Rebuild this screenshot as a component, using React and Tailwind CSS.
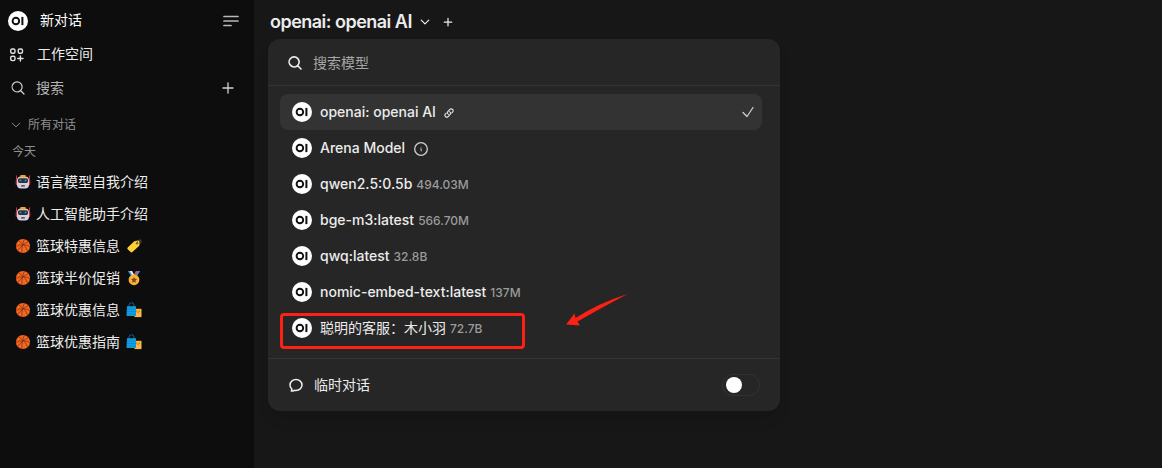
import React from 'react';

function Logo() {
  return (
    <svg viewBox="0 0 20 20" className="size-5 shrink-0">
      <circle cx="10" cy="10" r="10" fill="#fff" />
      <circle cx="7.9" cy="10" r="3.3" fill="none" stroke="#111" strokeWidth="1.9" />
      <rect x="13.4" y="5.9" width="2" height="8.2" fill="#111" />
    </svg>
  );
}

function Stroke({ d, className, width = 1.5 }) {
  return (
    <svg
      viewBox="0 0 24 24"
      fill="none"
      stroke="currentColor"
      strokeWidth={width}
      strokeLinecap="round"
      strokeLinejoin="round"
      className={className}
    >
      <path d={d} />
    </svg>
  );
}

const SEARCH = 'm21 21-5.2-5.2m0 0A7.5 7.5 0 1 0 5.2 5.2a7.5 7.5 0 0 0 10.6 10.6Z';
const CHEVRON = 'm19.5 8.25-7.5 7.5-7.5-7.5';
const PLUS = 'M12 4.5v15m7.5-7.5h-15';
const LINK =
  'M13.19 8.688a4.5 4.5 0 0 1 1.242 7.244l-4.5 4.5a4.5 4.5 0 0 1-6.364-6.364l1.757-1.757m13.35-.622 1.757-1.757a4.5 4.5 0 0 0-6.364-6.364l-4.5 4.5a4.5 4.5 0 0 0 1.242 7.244';
const CHAT =
  'M12 20.25c4.97 0 9-3.694 9-8.25s-4.03-8.25-9-8.25S3 7.444 3 12c0 2.104.859 4.023 2.273 5.48.432.447.74 1.04.586 1.641a4.483 4.483 0 0 1-.923 1.785A5.969 5.969 0 0 0 6 21c1.282 0 2.47-.402 3.445-1.087.81.22 1.668.337 2.555.337Z';

function Workspace() {
  return (
    <svg viewBox="0 0 16 16" fill="none" stroke="#e3e3e3" strokeWidth="1.4" className="size-4">
      <rect x="1.7" y="2" width="4.300" height="4.300" rx="1.500" />
      <rect x="9.2" y="2" width="4.300" height="4.300" rx="1.500" />
      <rect x="1.7" y="9.3" width="4.300" height="4.300" rx="1.500" />
      <path d="M11.400 8.900v5.200M8.800 11.500h5.200" strokeLinecap="round" />
    </svg>
  );
}

function Robot() {
  return (
    <svg viewBox="0 0 16 16" className="size-4">
      <path d="M1.500 1.500v5M14.500 1.500v5" stroke="#d13438" strokeWidth="1" />
      <rect x=".7" y="6" width="2" height="5" rx=".8" fill="#d13438" />
      <rect x="13.3" y="6" width="2" height="5" rx=".8" fill="#d13438" />
      <rect x="2" y="2.6" width="12" height="12" rx="4" fill="#d8cfe0" />
      <rect x="5.300" y="1" width="5.400" height="2.400" rx=".8" fill="#f2a52b" />
      <rect x="3" y="4.300" width="10" height="4.600" rx="1.600" fill="#27323a" />
      <circle cx="5.4" cy="6.5" r="1.100" fill="#2b8fa5" />
      <circle cx="10.6" cy="6.5" r="1.100" fill="#2b8fa5" />
      <rect x="6" y="11.300" width="4" height="1.300" rx=".6" fill="#35303a" />
    </svg>
  );
}

function Basketball() {
  return (
    <svg viewBox="0 0 16 16" className="size-4">
      <circle cx="8" cy="8" r="7.1" fill="#f8651f" />
      <path
        d="M9.5 1C7.5 5 6.500 10 7 15M1 8.500C5 6 11 6 15 9M3.500 2.700C7 5 11.500 9 12.500 13.500M2.300 12.500C5 9.500 10 5 13.500 3.500"
        stroke="#5c2c20"
        strokeWidth=".65"
        fill="none"
      />
    </svg>
  );
}

function Tag() {
  return (
    <svg viewBox="0 0 16 16" className="size-4">
      <path d="M8 3.600Q8.500 3 9.300 2.900L12.300 2.500Q13.300 2.500 13.400 3.500L13.600 6.500Q13.600 7.300 13 7.900L6.400 14.100Q5.500 14.900 4.600 14.100L1.700 11.200Q.8 10.300 1.700 9.400Z" fill="#fdd037" />
      <circle cx="11" cy="5.200" r="1.200" fill="#9c5a22" />
      <path d="M11.300 5C11 2 14.600.9 15.100 3.200 15.300 4.700 14 5.800 12.800 5.500" stroke="#7a6a58" strokeWidth=".8" fill="none" />
    </svg>
  );
}

function Medal() {
  return (
    <svg viewBox="0 0 16 16" className="size-4">
      <path d="M1.800 1h4l3 5H5Z" fill="#2d9be0" />
      <path d="M14.200 1h-4L7 6h4Z" fill="#2d9be0" />
      <path d="M3.800 1h2.300L8.700 6H6.500Z" fill="#f3e8ea" />
      <path d="M12.200 1H9.900L7.300 6h2.200Z" fill="#e04a50" />
      <circle cx="8" cy="9.800" r="5.400" fill="#f9b233" />
      <path d="m8 6.900.95 1.900 2.100.3-1.500 1.500.35 2.100L8 11.700l-1.900 1 .35-2.100-1.500-1.500 2.100-.3Z" fill="#7c4a1c" />
    </svg>
  );
}

function Bags() {
  return (
    <svg viewBox="0 0 16 16" className="size-4">
      <path d="M3 5V3Q3 .8 5.500.8T8 3v2" stroke="#245a86" strokeWidth="1" fill="none" />
      <path d="M8.500 6.800h7v8.300h-7Z" fill="#fbb941" />
      <path d="M10.800 8.300v1q0 1 1.300 1t1.300-1v-1" stroke="#9a6320" strokeWidth=".6" fill="none" />
      <path d="M1 4.300h9V14H.5Z" fill="#159de3" />
      <path d="M1 7h9M.8 9.500H10M.8 12H10" stroke="#0d7fc4" strokeWidth=".6" />
    </svg>
  );
}

const chats = [
  [Robot, '语言模型自我介绍'],
  [Robot, '人工智能助手介绍'],
  [Basketball, '篮球特惠信息', Tag],
  [Basketball, '篮球半价促销', Medal],
  [Basketball, '篮球优惠信息', Bags],
  [Basketball, '篮球优惠指南', Bags],
];

function Sidebar() {
  return (
    <aside className="flex w-[254px] shrink-0 flex-col bg-[#0d0d0d] text-sm text-[#ececec]">
      <div className="flex h-[41px] items-center pl-2 pr-[14px]">
        <Logo />
        <span className="ml-3 flex-1 pb-0.5 text-white">新对话</span>
        <svg viewBox="0 0 18 12" className="h-3 w-[18px]" stroke="#b8b8b8" strokeWidth="1.700" strokeLinecap="round">
          <path d="M2 1.500h14M2 6h14M2 10.500h7" />
        </svg>
      </div>
      <div className="flex h-[27px] items-center pl-[9px]">
        <Workspace />
        <span className="ml-3 pb-0.5">工作空间</span>
      </div>
      <div className="flex h-10 items-center pl-[10px] pr-[18px] text-[#b4b4b4]">
        <Stroke d={SEARCH} className="size-4 text-[#d5d5d5]" width={1.800} />
        <span className="ml-[10px] flex-1">搜索</span>
        <Stroke d={PLUS} className="size-4 text-[#cfcfcf]" width={2} />
      </div>
      <div className="flex h-[34px] items-center pl-[10px] text-xs text-[#8f8f8f]">
        <Stroke d={CHEVRON} className="size-3" width={2} />
        <span className="ml-[6px]">所有对话</span>
      </div>
      <div className="flex h-6 items-center pb-1 pl-3 text-xs text-[#8f8f8f]">今天</div>
      {chats.map(([Icon, title, End]) => (
        <div key={title} className="flex h-8 items-center pl-[15px]">
          <Icon />
          <span className="ml-[5px]">{title}</span>
          {End && <span className="ml-[6px]"><End /></span>}
        </div>
      ))}
    </aside>
  );
}

const models = [
  ['Arena Model', null],
  ['qwen2.5:0.5b', '494.03M'],
  ['bge-m3:latest', '566.70M'],
  ['qwq:latest', '32.8B'],
  ['nomic-embed-text:latest', '137M'],
];

function Size({ children }) {
  return <span className="ml-1 pt-0.5 text-xs font-medium text-[#9b9b9b]">{children}</span>;
}

function ModelMenu() {
  return (
    <div className="ml-[14px] flex h-[372px] w-[512px] flex-col rounded-xl bg-[#262626] text-sm text-[#ececec] shadow-lg">
      <div className="flex h-[47px] items-center border-b border-[#333] pl-5 pt-0.5">
        <Stroke d={SEARCH} className="-ml-px size-4" width={2.500} />
        <span className="ml-[10px] text-[#a5a5a5]">搜索模型</span>
      </div>
      <div className="flex flex-col px-3 pt-2 font-[550]">
        <div className="flex h-9 w-[482px] items-center rounded-lg bg-[#333] px-3">
          <Logo />
          <span className="ml-2">openai: openai AI</span>
          <Stroke d={LINK} className="ml-2 mt-0.5 size-[10px]" width={2.500} />
          <Stroke d="m4.500 12.750 6 6 9-13.500" className="-mr-1.5 ml-auto size-4 text-[#d5d5d5]" width={1.800} />
        </div>
        {models.map(([name, size]) => (
          <div key={name} className="flex h-9 items-center px-3">
            <Logo />
            <span className="ml-2">{name}</span>
            {size ? (
              <Size>{size}</Size>
            ) : (
              <svg viewBox="0 0 16 16" className="ml-2 size-4" fill="none" stroke="#cfcfcf">
                <circle cx="8" cy="9" r="6.300" strokeWidth="1.300" />
                <path d="M7.500 8.800h.7v2.500M8 7v.6" strokeWidth="1" />
              </svg>
            )}
          </div>
        ))}
        <div className="relative flex h-9 items-center px-3">
          <Logo />
          <span className="ml-2 font-normal">聪明的客服：木小羽</span>
          <Size>72.7B</Size>
          <div className="absolute left-0 top-[3px] h-9 w-[245px] rounded-[4px] border-[3px] border-[#fc2114]" />
          <svg viewBox="0 0 64 34" className="absolute left-[285px] top-[-17px] h-[34px] w-16" fill="#fc2114">
            <path d="M1 31.500 9.500 20.500l1 4.500Q34 10 62.500 1 36 15 12.500 28.500l2.500 4Z" />
          </svg>
        </div>
      </div>
      <div className="mt-3 flex h-[53px] items-center border-t border-[#333] pl-5 pr-5">
        <Stroke d={CHAT} className="size-4" width={2.300} />
        <span className="ml-[10px] flex-1">临时对话</span>
        <div className="flex h-[22px] w-[38px] items-center rounded-full border border-[#323232] pl-[3px]">
          <div className="size-4 rounded-full bg-white" />
        </div>
      </div>
    </div>
  );
}

export default function App() {
  return (
    <div className="flex h-[468px] w-[1162px] overflow-hidden bg-[#171717] font-['Inter','Noto_Sans_CJK_SC',sans-serif]">
      <Sidebar />
      <main className="flex flex-1 flex-col">
        <div className="flex h-[39px] items-center pl-4 pt-1 text-[#ececec]">
          <span className="w-[141px] whitespace-nowrap text-[18px] font-[560] tracking-[-0.52px]">openai: openai AI</span>
          <Stroke d={CHEVRON} className="ml-2 size-3" width={2.600} />
          <Stroke d={PLUS} className="ml-[11px] size-3" width={2.500} />
        </div>
        <ModelMenu />
      </main>
    </div>
  );
}
